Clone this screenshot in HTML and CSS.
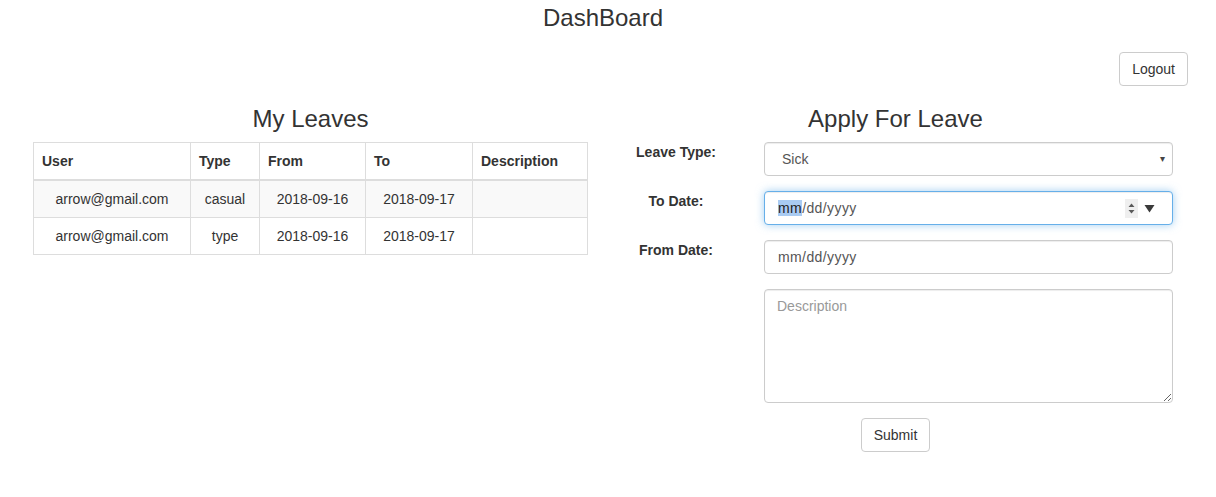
FILE: index.html
```html
<!DOCTYPE html>
<html lang="en">
<head>
<meta charset="utf-8">
<title>DashBoard</title>
<link rel="stylesheet" href="styles.css">
</head>
<body>
<header class="page-header">
  <h3 class="page-title">DashBoard</h3>
  <div class="toolbar">
    <button class="btn" type="button">Logout</button>
  </div>
</header>
<main class="main">
  <section class="col">
    <h3 class="section-title">My Leaves</h3>
    <table class="leaves">
      <colgroup>
        <col class="c-user"><col class="c-type"><col class="c-from"><col class="c-to"><col class="c-desc">
      </colgroup>
      <thead>
        <tr><th>User</th><th>Type</th><th>From</th><th>To</th><th>Description</th></tr>
      </thead>
      <tbody>
        <tr class="striped"><td>arrow@gmail.com</td><td>casual</td><td>2018-09-16</td><td>2018-09-17</td><td></td></tr>
        <tr><td>arrow@gmail.com</td><td>type</td><td>2018-09-16</td><td>2018-09-17</td><td></td></tr>
      </tbody>
    </table>
  </section>
  <section class="col">
    <h3 class="section-title">Apply For Leave</h3>
    <form class="leave-form">
      <div class="form-row">
        <label class="form-label">Leave Type:</label>
        <div class="control select">
          <span>Sick</span>
          <span class="select-arrow">&#9662;</span>
        </div>
      </div>
      <div class="form-row">
        <label class="form-label">To Date:</label>
        <div class="control date focused">
          <span class="date-text"><span class="sel">mm</span>/dd/yyyy</span>
          <span class="date-icons">
            <svg class="spin" width="13" height="19" viewBox="0 0 13 19"><rect width="13" height="19" fill="#efefef"/><path d="M3.5 8 L6.5 4.5 L9.5 8 Z M3.5 11 L9.5 11 L6.5 14.5 Z" fill="#5a5a5a"/></svg>
            <svg class="drop" width="11" height="9" viewBox="0 0 11 9"><path d="M0.5 1 L10.5 1 L5.5 8.5 Z" fill="#3a3a3a"/></svg>
          </span>
        </div>
      </div>
      <div class="form-row">
        <label class="form-label">From Date:</label>
        <div class="control date">
          <span class="date-text">mm/dd/yyyy</span>
        </div>
      </div>
      <div class="form-row">
        <span></span>
        <textarea class="control textarea" placeholder="Description"></textarea>
      </div>
      <div class="submit-row">
        <button class="btn" type="button">Submit</button>
      </div>
    </form>
  </section>
</main>
</body>
</html>
```

FILE: styles.css
```css
* { box-sizing: border-box; }

body {
  margin: 0;
  font-family: "Liberation Sans", Arial, Helvetica, sans-serif;
  font-size: 14px;
  line-height: 20px;
  color: #333;
  background: #fff;
}

.page-header {
  padding-top: 5px;
}

.page-title {
  margin: 0;
  padding-right: 10px;
  font-size: 24px;
  line-height: 26px;
  font-weight: 400;
  text-align: center;
}

.toolbar {
  display: flex;
  justify-content: flex-end;
  margin-top: 21px;
  padding-right: 28px;
}

.btn {
  font-family: inherit;
  font-size: 14px;
  line-height: 20px;
  color: #333;
  background: #fff;
  border: 1px solid #ccc;
  border-radius: 4px;
  padding: 6px 12px;
  height: 34px;
  cursor: pointer;
}

.main {
  display: flex;
  gap: 30px;
  padding: 0 43px 0 33px;
}

.col {
  flex: 1 1 0;
  min-width: 0;
}

.section-title {
  margin: 20px 0 10px;
  font-size: 24px;
  line-height: 26px;
  font-weight: 400;
  text-align: center;
}

.leaves {
  width: 100%;
  border-collapse: collapse;
  table-layout: fixed;
}

.c-user { width: 157px; }
.c-type { width: 69px; }
.c-from { width: 106px; }
.c-to { width: 107px; }

.leaves th,
.leaves td {
  border: 1px solid #ddd;
  padding: 8px;
  line-height: 20px;
}

.leaves th {
  text-align: left;
  font-weight: 700;
  border-bottom-width: 2px;
  vertical-align: bottom;
}

.leaves td {
  text-align: center;
}

.leaves .striped td {
  background: #f9f9f9;
}

.form-row {
  display: grid;
  grid-template-columns: 116px 1fr;
  column-gap: 30px;
  margin-bottom: 15px;
}

.form-label {
  font-weight: 700;
  text-align: center;
  line-height: 20px;
}

.control {
  height: 34px;
  padding: 6px 12px;
  border: 1px solid #ccc;
  border-radius: 4px;
  box-shadow: inset 0 1px 1px rgba(0, 0, 0, .075);
  color: #555;
  background: #fff;
  line-height: 20px;
  font-size: 14px;
  font-family: inherit;
}

.select {
  display: flex;
  justify-content: space-between;
  align-items: center;
  padding-left: 17px;
  padding-right: 7px;
}

.select-arrow {
  font-size: 10px;
  color: #444;
}

.date {
  display: flex;
  justify-content: space-between;
  align-items: center;
  padding-left: 13px;
  padding-right: 17px;
}

.date-text {
  letter-spacing: 0.4px;
}

.date.focused {
  border-color: #66afe9;
  box-shadow: inset 0 1px 1px rgba(0, 0, 0, .075), 0 0 8px rgba(102, 175, 233, .6);
}

.date-text .sel {
  background: #a9cbf2;
  color: #222;
}

.date-icons {
  display: flex;
  align-items: center;
  gap: 6px;
}

.spin, .drop { display: block; }

.textarea {
  display: block;
  width: 100%;
  height: 114px;
  resize: both;
  outline: none;
}

.textarea::placeholder {
  color: #999;
}

.submit-row {
  display: flex;
  justify-content: center;
}
```
